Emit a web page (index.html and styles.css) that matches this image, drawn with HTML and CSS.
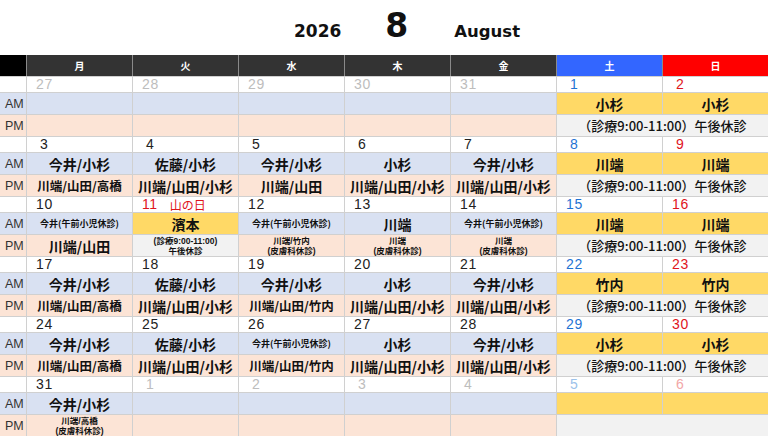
FILE: index.html
```html
<!DOCTYPE html>
<html lang="ja">
<head>
<meta charset="utf-8">
<title>2026 8 August</title>
<link rel="stylesheet" href="styles.css">
</head>
<body>
<div class="title">
  <span class="year">2026</span>
  <span class="month">8</span>
  <span class="en">August</span>
</div>
<div class="head">
  <div class="hc corner"></div>
  <div class="hc">月</div>
  <div class="hc">火</div>
  <div class="hc">水</div>
  <div class="hc">木</div>
  <div class="hc">金</div>
  <div class="hc sat">土</div>
  <div class="hc sun">日</div>
</div>
<div class="body">
  <!-- week 1 -->
  <div class="lbl"></div>
  <div class="d o">27</div>
  <div class="d o">28</div>
  <div class="d o">29</div>
  <div class="d o">30</div>
  <div class="d o">31</div>
  <div class="d sa s">1</div>
  <div class="d su s">2</div>
  <div class="lbl am">AM</div>
  <div class="am"></div>
  <div class="am"></div>
  <div class="am"></div>
  <div class="am"></div>
  <div class="am"></div>
  <div class="yl n">小杉</div>
  <div class="yl n">小杉</div>
  <div class="lbl pm">PM</div>
  <div class="pm"></div>
  <div class="pm"></div>
  <div class="pm"></div>
  <div class="pm"></div>
  <div class="pm"></div>
  <div class="gy wk">（診療9:00-11:00）午後休診</div>

  <!-- week 2 -->
  <div class="lbl"></div>
  <div class="d s">3</div>
  <div class="d s">4</div>
  <div class="d s">5</div>
  <div class="d s">6</div>
  <div class="d s">7</div>
  <div class="d sa s">8</div>
  <div class="d su s">9</div>
  <div class="lbl am">AM</div>
  <div class="am n">今井/小杉</div>
  <div class="am n">佐藤/小杉</div>
  <div class="am n">今井/小杉</div>
  <div class="am n">小杉</div>
  <div class="am n">今井/小杉</div>
  <div class="yl n">川端</div>
  <div class="yl n">川端</div>
  <div class="lbl pm">PM</div>
  <div class="pm n sm">川端/山田/高橋</div>
  <div class="pm n">川端/山田/小杉</div>
  <div class="pm n">川端/山田</div>
  <div class="pm n">川端/山田/小杉</div>
  <div class="pm n">川端/山田/小杉</div>
  <div class="gy wk">（診療9:00-11:00）午後休診</div>

  <!-- week 3 -->
  <div class="lbl"></div>
  <div class="d">10</div>
  <div class="d hol">11<span class="holname">山の日</span></div>
  <div class="d">12</div>
  <div class="d">13</div>
  <div class="d">14</div>
  <div class="d sa">15</div>
  <div class="d su">16</div>
  <div class="lbl am">AM</div>
  <div class="am t">今井(午前小児休診)</div>
  <div class="yl n">濱本</div>
  <div class="am t">今井(午前小児休診)</div>
  <div class="am n">川端</div>
  <div class="am t">今井(午前小児休診)</div>
  <div class="yl n">川端</div>
  <div class="yl n">川端</div>
  <div class="lbl pm">PM</div>
  <div class="pm n">川端/山田</div>
  <div class="gy t2"><span class="ln">(診療9:00-11:00)</span><span class="ln">午後休診</span></div>
  <div class="pm t2"><span class="ln">川端/竹内</span><span class="ln">(皮膚科休診)</span></div>
  <div class="pm t2"><span class="ln">川端</span><span class="ln">(皮膚科休診)</span></div>
  <div class="pm t2"><span class="ln">川端</span><span class="ln">(皮膚科休診)</span></div>
  <div class="gy wk">（診療9:00-11:00）午後休診</div>

  <!-- week 4 -->
  <div class="lbl"></div>
  <div class="d">17</div>
  <div class="d">18</div>
  <div class="d">19</div>
  <div class="d">20</div>
  <div class="d">21</div>
  <div class="d sa">22</div>
  <div class="d su">23</div>
  <div class="lbl am">AM</div>
  <div class="am n">今井/小杉</div>
  <div class="am n">佐藤/小杉</div>
  <div class="am n">今井/小杉</div>
  <div class="am n">小杉</div>
  <div class="am n">今井/小杉</div>
  <div class="yl n">竹内</div>
  <div class="yl n">竹内</div>
  <div class="lbl pm">PM</div>
  <div class="pm n sm">川端/山田/高橋</div>
  <div class="pm n">川端/山田/小杉</div>
  <div class="pm n sm">川端/山田/竹内</div>
  <div class="pm n">川端/山田/小杉</div>
  <div class="pm n">川端/山田/小杉</div>
  <div class="gy wk">（診療9:00-11:00）午後休診</div>

  <!-- week 5 -->
  <div class="lbl"></div>
  <div class="d">24</div>
  <div class="d">25</div>
  <div class="d">26</div>
  <div class="d">27</div>
  <div class="d">28</div>
  <div class="d sa">29</div>
  <div class="d su">30</div>
  <div class="lbl am">AM</div>
  <div class="am n">今井/小杉</div>
  <div class="am n">佐藤/小杉</div>
  <div class="am t">今井(午前小児休診)</div>
  <div class="am n">小杉</div>
  <div class="am n">今井/小杉</div>
  <div class="yl n">小杉</div>
  <div class="yl n">小杉</div>
  <div class="lbl pm">PM</div>
  <div class="pm n sm">川端/山田/高橋</div>
  <div class="pm n">川端/山田/小杉</div>
  <div class="pm n sm">川端/山田/竹内</div>
  <div class="pm n">川端/山田/小杉</div>
  <div class="pm n">川端/山田/小杉</div>
  <div class="gy wk">（診療9:00-11:00）午後休診</div>

  <!-- week 6 -->
  <div class="lbl"></div>
  <div class="d">31</div>
  <div class="d o s">1</div>
  <div class="d o s">2</div>
  <div class="d o s">3</div>
  <div class="d o s">4</div>
  <div class="d sa o s">5</div>
  <div class="d su o s">6</div>
  <div class="lbl am">AM</div>
  <div class="am n">今井/小杉</div>
  <div class="am"></div>
  <div class="am"></div>
  <div class="am"></div>
  <div class="am"></div>
  <div class="yl"></div>
  <div class="yl"></div>
  <div class="lbl pm">PM</div>
  <div class="pm t2"><span class="ln">川端/高橋</span><span class="ln">(皮膚科休診)</span></div>
  <div class="pm"></div>
  <div class="pm"></div>
  <div class="pm"></div>
  <div class="pm"></div>
  <div class="gy wk"></div>
</div>
</body>
</html>
```

FILE: styles.css
```css
html, body {
  margin: 0;
  padding: 0;
  background: #ffffff;
}
body {
  width: 768px;
  height: 436px;
  overflow: hidden;
  font-family: "Noto Sans CJK JP", "Liberation Sans", sans-serif;
  color: #111;
}
.title {
  height: 55px;
  box-sizing: border-box;
  padding-top: 10px;
  padding-left: 294px;
  display: flex;
  align-items: baseline;
  font-family: "DejaVu Sans", "Liberation Sans", sans-serif;
  font-weight: bold;
  color: #111;
}
.year {
  font-size: 17px;
}
.month {
  font-size: 33px;
  line-height: 32px;
  margin-left: 44px;
}
.en {
  font-size: 16.5px;
  margin-left: 46px;
}
.head {
  display: grid;
  grid-template-columns: 26px repeat(7, 1fr);
  grid-template-rows: 21px;
  column-gap: 1px;
  background: #8a8a8a;
}
.hc {
  background: #333333;
  color: #ffffff;
  font-size: 10px;
  font-weight: bold;
  display: flex;
  align-items: center;
  justify-content: center;
}
.hc.corner { background: #000000; }
.hc.sat { background: #3366ff; }
.hc.sun { background: #ff0000; }
.body {
  display: grid;
  grid-template-columns: 26px repeat(7, 1fr);
  grid-template-rows: repeat(6, 15px 21px 21px);
  gap: 1px;
  padding-top: 1px;
  background: #d0d0d0;
}
.body > div {
  background: #ffffff;
  display: flex;
  align-items: center;
  justify-content: center;
  overflow: hidden;
  white-space: nowrap;
}
.body > .lbl {
  justify-content: flex-start;
  padding-left: 5px;
  font-family: "Liberation Sans", sans-serif;
  font-size: 12.5px;
  color: #333;
}
.body > .lbl.am { background: #d9e1f2; }
.body > .lbl.pm { background: #fce4d6; }
.body > .d {
  justify-content: flex-start;
  align-items: flex-end;
  padding-left: 9px;
  font-family: "Liberation Sans", sans-serif;
  font-size: 14px;
  line-height: 15px;
  letter-spacing: 0.6px;
  color: #222;
}
.body > .d.s { padding-left: 13px; }
.body > .d.o { color: #bdbdbd; }
.body > .d.sa { color: #1f73d3; }
.body > .d.su { color: #e0141c; }
.body > .d.sa.o { color: #9cc2ea; }
.body > .d.su.o { color: #f2a7a7; }
.body > .d.hol { color: #e0141c; }
.holname {
  font-family: "Noto Sans CJK JP", sans-serif;
  font-size: 12px;
  margin-left: 12px;
  letter-spacing: 0;
}
.body > .am { background: #d9e1f2; }
.body > .pm { background: #fce4d6; }
.body > .yl { background: #ffd966; }
.body > .gy { background: #f2f2f2; }
.body > .wk {
  grid-column: span 2;
  font-size: 13px;
  font-weight: 500;
}
.n {
  font-size: 14px;
  font-weight: bold;
}
.n.sm {
  font-size: 12.5px;
}
.t {
  font-size: 9px;
  font-weight: bold;
}
.body > .t2 {
  flex-direction: column;
  font-family: "Liberation Sans", "Noto Sans CJK JP", sans-serif;
  font-size: 8.5px;
  font-weight: bold;
}
.ln {
  display: block;
  height: 10px;
  line-height: 10px;
}
```
